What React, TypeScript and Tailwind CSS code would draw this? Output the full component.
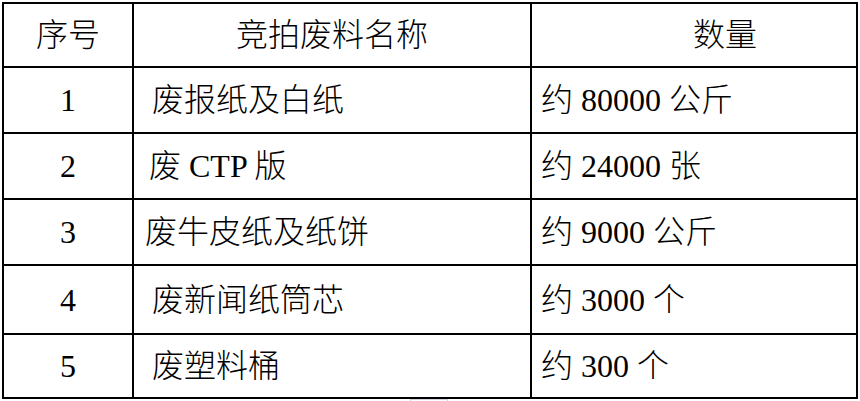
import React from "react";

const rows = [
  { n: "1", name: "废报纸及白纸", qty: "约 80000 公斤", pl: "pl-[18px]" },
  { n: "2", name: "废 CTP 版", qty: "约 24000 张", pl: "pl-[15px]" },
  { n: "3", name: "废牛皮纸及纸饼", qty: "约 9000 公斤", pl: "pl-[11px]" },
  { n: "4", name: "废新闻纸筒芯", qty: "约 3000 个", pl: "pl-[18px]" },
  { n: "5", name: "废塑料桶", qty: "约 300 个", pl: "pl-[18px]" },
];

export default function App() {
  const cell = "border-r-2 border-b-2 border-black flex items-center";
  return (
    <div
      className="w-[860px] h-[401px] bg-white text-black overflow-hidden pt-[2px] pl-[2px] text-[32px] font-light leading-none"
      style={{ fontFamily: '"Liberation Serif", "Noto Sans CJK SC", serif' }}
    >
      <div className="grid grid-cols-[130px_398px_326px] grid-rows-[64px_66px_66px_66px_69px_64px] w-fit border-l-2 border-t-2 border-black">
        <div className={`${cell} justify-center`}>序号</div>
        <div className={`${cell} justify-center`}>竞拍废料名称</div>
        <div className={`${cell} pl-[161px]`}>数量</div>
        {rows.map((r) => (
          <React.Fragment key={r.n}>
            <div className={`${cell} justify-center`}>{r.n}</div>
            <div className={`${cell} ${r.pl}`}>{r.name}</div>
            <div className={`${cell} pl-[9px]`}>{r.qty}</div>
          </React.Fragment>
        ))}
      </div>
      <div className="ml-[408px] w-[38px] h-[3px] border-t border-x border-gray-300" />
    </div>
  );
}
